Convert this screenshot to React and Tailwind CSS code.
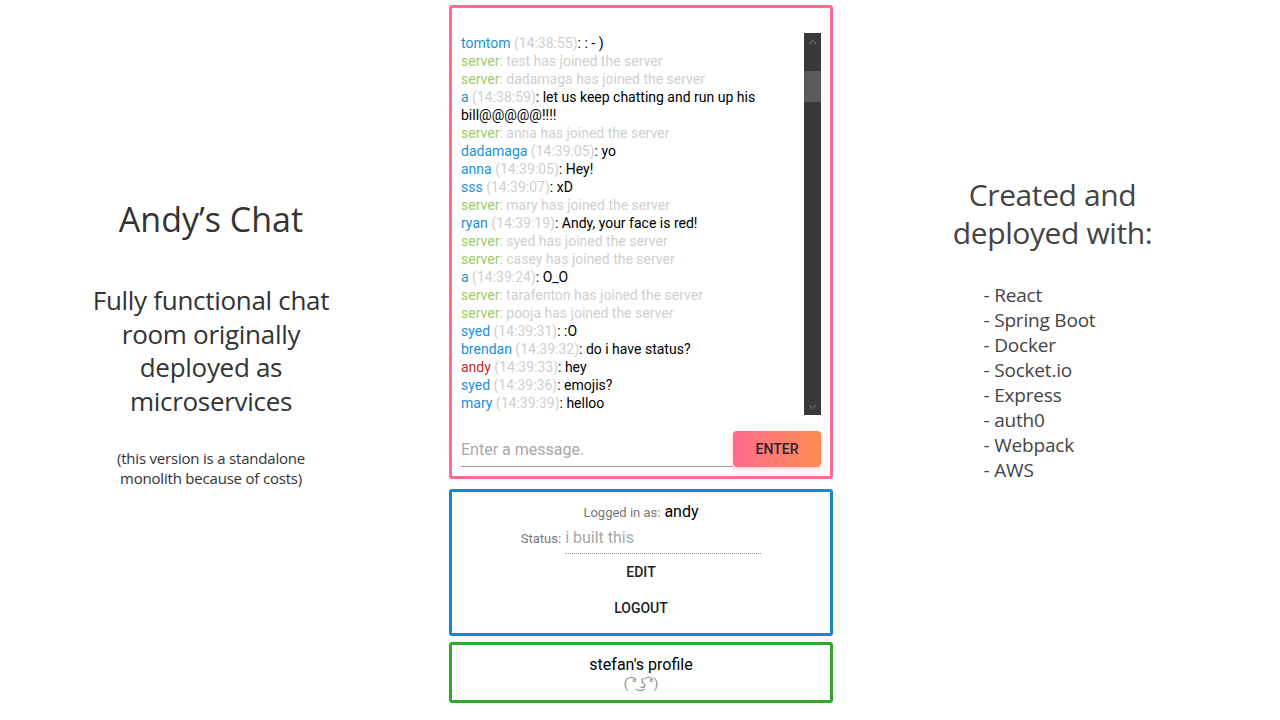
import React from "react";

const messages = [
  { u: "tomtom", t: "14:38:55", m: ": - )" },
  { s: "test has joined the server" },
  { s: "dadamaga has joined the server" },
  { u: "a", t: "14:38:59", m: "let us keep chatting and run up his bill@@@@@!!!!" },
  { s: "anna has joined the server" },
  { u: "dadamaga", t: "14:39:05", m: "yo" },
  { u: "anna", t: "14:39:05", m: "Hey!" },
  { u: "sss", t: "14:39:07", m: "xD" },
  { s: "mary has joined the server" },
  { u: "ryan", t: "14:39:19", m: "Andy, your face is red!" },
  { s: "syed has joined the server" },
  { s: "casey has joined the server" },
  { u: "a", t: "14:39:24", m: "O_O" },
  { s: "tarafenton has joined the server" },
  { s: "pooja has joined the server" },
  { u: "syed", t: "14:39:31", m: ":O" },
  { u: "brendan", t: "14:39:32", m: "do i have status?" },
  { u: "andy", t: "14:39:33", m: "hey", me: true },
  { u: "syed", t: "14:39:36", m: "emojis?" },
  { u: "mary", t: "14:39:39", m: "helloo" },
];

const side = { fontFamily: '"Open Sans", "Noto Sans", sans-serif' };
const roboto = { fontFamily: 'Roboto, "Noto Sans", sans-serif' };

function Message({ msg }) {
  if (msg.s) {
    return (
      <div className="leading-[18px]">
        <span className="text-[#9ccc65]">server</span>
        <span className="text-[#cfcfcf]">: {msg.s}</span>
      </div>
    );
  }
  return (
    <div className="leading-[18px]">
      <span className={msg.me ? "text-[#c62828]" : "text-[#1e90d6]"}>{msg.u}</span>
      <span className="text-[#cfcfcf]"> ({msg.t})</span>
      <span className="text-black">: {msg.m}</span>
    </div>
  );
}

function Scrollbar() {
  return (
    <div className="w-[17px] h-full bg-[#393939] flex flex-col">
      <div className="h-[17px] flex items-center justify-center">
        <svg width="9" height="6" viewBox="0 0 9 6">
          <path d="M1 5 L4.5 1.5 L8 5" stroke="#5c5c5c" strokeWidth="1.6" fill="none" />
        </svg>
      </div>
      <div className="h-[21px]" />
      <div className="h-[31px] bg-[#5a5a5a]" />
      <div className="flex-1" />
      <div className="h-[17px] flex items-center justify-center">
        <svg width="9" height="6" viewBox="0 0 9 6">
          <path d="M1 1 L4.5 4.5 L8 1" stroke="#5c5c5c" strokeWidth="1.6" fill="none" />
        </svg>
      </div>
    </div>
  );
}

export default function App() {
  return (
    <div className="w-[1280px] h-[720px] bg-white flex overflow-hidden">
      {/* Left column */}
      <div className="w-[422px] flex flex-col items-center text-[#333333] text-center" style={side}>
        <div className="mt-[196px] text-[34px] leading-[46px]">Andy’s Chat</div>
        <div className="mt-[42px] text-[26px] leading-[33.5px] w-[260px] tracking-[-0.3px]">
          Fully functional chat room originally deployed as microservices
        </div>
        <div className="mt-[30px] text-[15px] leading-[20px] tracking-[-0.2px]">
          (this version is a standalone
          <br />
          monolith because of costs)
        </div>
      </div>

      {/* Center column */}
      <div className="ml-[27px] w-[384px] flex flex-col" style={roboto}>
        <div className="mt-[5px] h-[474px] border-[3px] border-[#ff6d8c] rounded-[3px] px-[9px] pt-[25px] pb-[9px] flex flex-col">
          <div className="h-[382px] flex">
            <div className="flex-1 text-[14px] pt-[1px] pr-[6px] overflow-hidden">
              {messages.map((m, i) => (
                <Message key={i} msg={m} />
              ))}
            </div>
            <Scrollbar />
          </div>
          <div className="mt-[16px] h-[36px] flex items-end">
            <div className="flex-1 h-[34px] border-b border-[#9a9a9a] flex items-center text-[16px] text-[#a8a8a8]">
              Enter a message.
            </div>
            <div className="self-stretch w-[88px] rounded-[4px] bg-gradient-to-r from-[#ff6a8c] to-[#ff8c4c] shadow-[0_2px_6px_rgba(255,106,140,0.35)] flex items-center justify-center text-[14px] font-medium text-[#2a2230]">
              ENTER
            </div>
          </div>
        </div>

        <div className="mt-[10px] h-[147px] border-[3px] border-[#1a85c8] rounded-[3px] flex flex-col items-center pt-[8px]">
          <div className="h-[20px] flex items-baseline">
            <span className="text-[13px] text-[#777777]">Logged in as:</span>
            <span className="ml-[4px] text-[16px] text-black">andy</span>
          </div>
          <div className="mt-[8px] flex items-baseline">
            <span className="text-[13px] text-[#777777]">Status:</span>
            <div className="ml-[4px] w-[196px] h-[26px] border-b border-dotted border-[#9a9a9a] text-[16px] text-[#a8a8a8] leading-[20px]">
              i built this
            </div>
          </div>
          <div className="h-[36px] flex items-center text-[14px] font-medium text-[#222222]">EDIT</div>
          <div className="h-[36px] flex items-center text-[14px] font-medium text-[#222222]">LOGOUT</div>
        </div>

        <div className="mt-[6px] h-[61px] border-[3px] border-[#2fa82b] rounded-[3px] flex flex-col items-center pt-[10px]">
          <div className="text-[16px] leading-[20px] text-black">stefan's profile</div>
          <div className="mt-[1px] text-[13px] leading-[16px] text-[#8a8a8a]">( ͡° ͜ʖ ͡°)</div>
        </div>
      </div>

      {/* Right column */}
      <div className="flex-1 flex flex-col items-center text-[#444444]" style={side}>
        <div className="mt-[176px] mr-[8px] text-[30px] leading-[38px] text-center tracking-[-0.4px]">
          Created and
          <br />
          deployed with:
        </div>
        <div className="mt-[31px] ml-[-34px] text-[19px] leading-[25px] tracking-[-0.2px]">
          {["React", "Spring Boot", "Docker", "Socket.io", "Express", "auth0", "Webpack", "AWS"].map((t) => (
            <div key={t}>- {t}</div>
          ))}
        </div>
      </div>
    </div>
  );
}
